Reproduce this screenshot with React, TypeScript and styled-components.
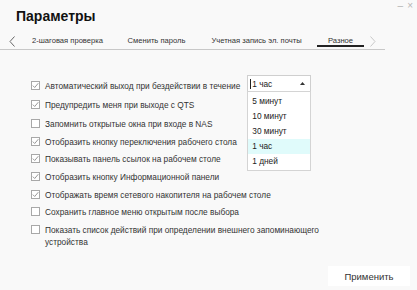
import React from "react";
import styled, { createGlobalStyle } from "styled-components";

const Global = createGlobalStyle`
  html, body { margin: 0; padding: 0; background: #f9f9f9; }
  body { font-family: "Liberation Sans", Arial, sans-serif; color: #222; }
`;

const Page = styled.div`
  width: 417px;
  height: 290px;
  background: #f9f9f9;
  position: relative;
  overflow: hidden;
  display: flex;
  flex-direction: column;
`;

const WinControls = styled.div`
  position: absolute;
  top: 0px;
  right: 4px;
  display: flex;
  gap: 4px;
  color: #b5b5b5;
  font-size: 10px;
`;

const Title = styled.h1`
  margin: 0;
  padding: 8px 0 0 16px;
  height: 18px;
  font-size: 14px;
  font-weight: bold;
  color: #111;
  line-height: 17px;
`;

const TabBar = styled.div`
  margin-top: 9px;
  width: 385px;
  height: 14px;
  border-bottom: 1px solid #c8c8c8;
  display: flex;
  align-items: flex-start;
`;

const Arrow = styled.span`
  width: 12px;
  display: flex;
  justify-content: center;
  margin-top: 1px;
`;

const Tab = styled.div<{ $w: number; $active?: boolean }>`
  width: ${(p) => p.$w}px;
  height: 12px;
  padding-top: 1px;
  font-size: 7.6px;
  line-height: 9px;
  color: #333;
  display: flex;
  justify-content: center;
  box-sizing: border-box;
  border-bottom: ${(p) => (p.$active ? "2px solid #222" : "2px solid transparent")};
`;

const Content = styled.div`
  flex: 1;
  padding: 30px 0 0 31px;
  display: flex;
  flex-direction: column;
`;

const Row = styled.div<{ $h: number }>`
  display: flex;
  align-items: flex-start;
  min-height: ${(p) => p.$h}px;
  font-size: 8.3px;
  line-height: 12px;
  color: #333;
`;

const Box = styled.span`
  width: 9px;
  height: 9px;
  margin-top: 1px;
  margin-right: 5px;
  border: 1px solid #a8a8a8;
  background: #fff;
  box-sizing: border-box;
  flex-shrink: 0;
  display: flex;
  align-items: center;
  justify-content: center;
`;

const Label = styled.span`
  max-width: 300px;
`;

const SelectWrap = styled.div`
  position: relative;
  margin: -5px 0 0 7px;
`;

const SelectBox = styled.div`
  width: 64px;
  height: 17px;
  box-sizing: border-box;
  border: 1px solid #cfcfcf;
  background: #fff;
  display: flex;
  align-items: center;
  justify-content: space-between;
  padding: 0 5px 0 2px;
  font-size: 8.3px;
  color: #222;
`;

const Caret = styled.span`
  border-left: 1px solid #222;
  height: 10px;
  margin-right: 1px;
`;

const List = styled.div`
  position: absolute;
  left: 0;
  top: 16px;
  width: 64px;
  box-sizing: border-box;
  border: 1px solid #d4d4d4;
  background: #fff;
  padding: 2px 0 1px;
  z-index: 2;
`;

const Item = styled.div<{ $sel?: boolean }>`
  height: 15px;
  line-height: 15px;
  padding-left: 4px;
  font-size: 8.3px;
  color: #222;
  background: ${(p) => (p.$sel ? "#e0fbfb" : "transparent")};
`;

const Footer = styled.div`
  display: flex;
  justify-content: flex-end;
  padding: 0 7px 4px 0;
`;

const Button = styled.button`
  width: 82px;
  height: 20px;
  border: none;
  background: #fff;
  font-family: "Liberation Sans", Arial, sans-serif;
  font-size: 9.5px;
  color: #333;
  padding: 0;
`;

const Check = () => (
  <svg width="7" height="7" viewBox="0 0 7 7">
    <path d="M0.8 3.6 L2.7 5.5 L6.3 1.2" fill="none" stroke="#999" strokeWidth="1" />
  </svg>
);

const items = [
  { t: "Предупредить меня при выходе с QTS", c: true, h: 19 },
  { t: "Запомнить открытые окна при входе в NAS", c: false, h: 18 },
  { t: "Отобразить кнопку переключения рабочего стола", c: true, h: 17 },
  { t: "Показывать панель ссылок на рабочем столе", c: true, h: 18 },
  { t: "Отобразить кнопку Информационной панели", c: true, h: 18 },
  { t: "Отображать время сетевого накопителя на рабочем столе", c: true, h: 17 },
  { t: "Сохранить главное меню открытым после выбора", c: false, h: 18 },
  {
    t: "Показать список действий при определении внешнего запоминающего устройства",
    c: false,
    h: 24,
  },
];

export default function App() {
  return (
    <Page>
      <Global />
      <WinControls>
        <span>–</span>
        <span>×</span>
      </WinControls>
      <Title>Параметры</Title>
      <TabBar>
        <Arrow style={{ marginLeft: 6 }}>
          <svg width="7" height="11" viewBox="0 0 7 11">
            <path d="M5.5 0.5 L1 5.5 L5.5 10.5" fill="none" stroke="#666" strokeWidth="1" />
          </svg>
        </Arrow>
        <Tab $w={99}>2-шаговая проверка</Tab>
        <Tab $w={79}>Сменить пароль</Tab>
        <Tab $w={121}>Учетная запись эл. почты</Tab>
        <Tab $w={47} $active>
          Разное
        </Tab>
        <Arrow style={{ marginLeft: 2 }}>
          <svg width="7" height="11" viewBox="0 0 7 11">
            <path d="M1.5 0.5 L6 5.5 L1.5 10.5" fill="none" stroke="#c8c8c8" strokeWidth="1" />
          </svg>
        </Arrow>
      </TabBar>
      <Content>
        <Row $h={19}>
          <Box>
            <Check />
          </Box>
          <Label>Автоматический выход при бездействии в течение</Label>
          <SelectWrap>
            <SelectBox>
              <span>
                <Caret />1 час
              </span>
              <svg width="5" height="3" viewBox="0 0 5 3">
                <path d="M0 3 L2.5 0 L5 3 Z" fill="#333" />
              </svg>
            </SelectBox>
            <List>
              <Item>5 минут</Item>
              <Item>10 минут</Item>
              <Item>30 минут</Item>
              <Item $sel>1 час</Item>
              <Item>1 дней</Item>
            </List>
          </SelectWrap>
        </Row>
        {items.map((it) => (
          <Row key={it.t} $h={it.h}>
            <Box>{it.c && <Check />}</Box>
            <Label>{it.t}</Label>
          </Row>
        ))}
      </Content>
      <Footer>
        <Button>Применить</Button>
      </Footer>
    </Page>
  );
}
